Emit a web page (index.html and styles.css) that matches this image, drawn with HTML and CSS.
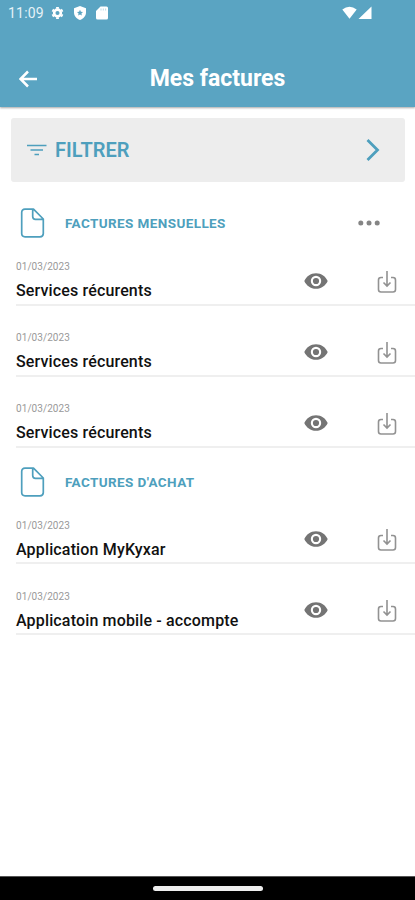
FILE: index.html
```html
<!DOCTYPE html>
<html lang="fr">
<head>
<meta charset="utf-8">
<title>Mes factures</title>
<link rel="stylesheet" href="styles.css">
</head>
<body>
<svg class="defs" width="0" height="0" aria-hidden="true">
  <symbol id="doc" viewBox="0 0 24 30"><path d="M4.500 1.200H13L22.800 11V25.500Q22.800 28.800 19.500 28.800H4.500Q1.200 28.800 1.200 25.500V4.500Q1.200 1.200 4.500 1.200ZM12.200 1.500V8.500Q12.200 11.300 15 11.300H22.500" fill="none" stroke="currentColor" stroke-width="1.700" stroke-linejoin="round"/></symbol>
  <symbol id="eye" viewBox="0 0 24 16"><path fill-rule="evenodd" fill="currentColor" d="M12 .2C6.500.2 2.300 3.500.3 8c2 4.500 6.200 7.800 11.700 7.800S21.700 12.500 23.700 8C21.700 3.500 17.500.2 12 .2ZM12 2.800a5.200 5.200 0 1 1 0 10.400a5.200 5.200 0 0 1 0-10.400ZM12 4.900a3.100 3.100 0 1 0 0 6.200a3.100 3.100 0 0 0 0-6.200Z"/></symbol>
  <symbol id="save" viewBox="0 0 20 24"><path d="M6 7.500H4Q1.500 7.500 1.500 10V19.500Q1.500 22 4 22H16Q18.500 22 18.500 19.500V10Q18.500 7.500 16 7.500H14M10 1V15.500M6.500 12.500L10 16L13.500 12.500" fill="none" stroke="currentColor" stroke-width="1.600"/></symbol>
</svg>
<div class="screen">
  <header class="top">
    <div class="status">
      <span class="clock">11:09</span>
      <svg class="gear" viewBox="0 0 14 14"><circle cx="7" cy="7" r="3.600" fill="none" stroke="#fff" stroke-width="2.800"/><path d="M7 .6V2.500M7 11.500V13.400M1.500 3.800L3 4.700M11 9.300L12.500 10.200M1.500 10.200L3 9.300M11 4.700L12.500 3.800" stroke="#fff" stroke-width="3"/></svg>
      <svg class="shield" viewBox="0 0 12 14"><path fill="#fff" fill-rule="evenodd" d="M6 0L12 2.200V6.500C12 10 9.500 12.800 6 14C2.500 12.800 0 10 0 6.500V2.200ZM6 3.800L6.900 5.800L9 6L7.400 7.400L7.900 9.500L6 8.400L4.100 9.500L4.600 7.400L3 6L5.100 5.800Z"/></svg>
      <svg class="card" viewBox="0 0 12 14"><path fill="#fff" d="M4.500.5H10.500Q12 .5 12 2V12Q12 13.500 10.500 13.500H1.500Q0 13.500 0 12V5Z"/><path d="M5 2.500V4.500M7.300 2.500V4.500M9.600 2.500V4.500" stroke="#a9d0e0" stroke-width=".8"/></svg>
      <svg class="signal" viewBox="0 0 31 14"><path fill="#fff" d="M.3 3.500Q7.500-1.800 14.700 3.500L7.500 12.700ZM16.500 13L29.500.5V13Z"/></svg>
    </div>
    <div class="bar">
      <svg class="back" viewBox="0 0 18 18"><path d="M18 9H2M9 1.500L1.500 9L9 16.500" fill="none" stroke="#fff" stroke-width="2.500"/></svg>
      <h1>Mes factures</h1>
    </div>
  </header>
  <main>
    <div class="filter">
      <svg class="lines" viewBox="0 0 20 12"><path d="M0 1.500H19.500M3.500 6H16M7.500 10.500H12" stroke="currentColor" stroke-width="1.700"/></svg>
      <span>FILTRER</span>
      <svg class="chevron" viewBox="0 0 14 24"><path d="M1.500 2L11.500 12L1.500 22" fill="none" stroke="currentColor" stroke-width="2.800"/></svg>
    </div>
    <section class="monthly">
      <div class="head"><svg class="doc"><use href="#doc"/></svg><h2>FACTURES MENSUELLES</h2><svg class="dots" viewBox="0 0 22 6"><g fill="#858585"><circle cx="2.800" cy="3" r="2.500"/><circle cx="11" cy="3" r="2.500"/><circle cx="19.200" cy="3" r="2.500"/></g></svg></div>
      <div class="row"><div class="info"><time>01/03/2023</time><b>Services récurents</b></div><svg class="eye"><use href="#eye"/></svg><svg class="save"><use href="#save"/></svg></div>
      <div class="row"><div class="info"><time>01/03/2023</time><b>Services récurents</b></div><svg class="eye"><use href="#eye"/></svg><svg class="save"><use href="#save"/></svg></div>
      <div class="row"><div class="info"><time>01/03/2023</time><b>Services récurents</b></div><svg class="eye"><use href="#eye"/></svg><svg class="save"><use href="#save"/></svg></div>
    </section>
    <section class="purchases">
      <div class="head"><svg class="doc"><use href="#doc"/></svg><h2>FACTURES D'ACHAT</h2></div>
      <div class="row"><div class="info"><time>01/03/2023</time><b>Application MyKyxar</b></div><svg class="eye"><use href="#eye"/></svg><svg class="save"><use href="#save"/></svg></div>
      <div class="row"><div class="info"><time>01/03/2023</time><b>Applicatoin mobile - accompte</b></div><svg class="eye"><use href="#eye"/></svg><svg class="save"><use href="#save"/></svg></div>
    </section>
  </main>
  <footer><i></i></footer>
</div>
</body>
</html>
```
FILE: styles.css
```css
* { box-sizing: border-box; }
body { margin: 0; font-family: Roboto, sans-serif; background: #fff; }
svg { display: block; flex: none; }
h1, h2 { margin: 0; }
.defs { position: absolute; }
.screen { width: 415px; height: 900px; display: flex; flex-direction: column; overflow: hidden; }
.top { height: 107px; background: #5aa4c2; color: #fff; box-shadow: 0 1px 2px rgba(0,0,0,.35); flex: none; }
.status { height: 26px; display: flex; align-items: center; padding: 0 42px 0 8px; }
.clock { width: 43px; font-size: 14px; letter-spacing: .2px; color: #e6f2f7; }
.gear { width: 13px; height: 14px; margin-right: 10px; }
.shield { width: 12px; height: 14px; margin-right: 10px; }
.card { width: 12px; height: 14px; }
.signal { width: 31px; height: 14px; margin-left: auto; }
.bar { height: 81px; display: flex; align-items: center; padding: 26px 0 2px 19px; }
.back { width: 18px; height: 18px; }
h1 { width: 361px; text-align: center; font-size: 23px; line-height: 26px; font-weight: 700; }
main { flex: 1; }
.filter { height: 64px; margin: 11px 10px 0 11px; padding: 0 25px 1px 16px; border-radius: 3px; background: #ededed; color: #4e9fbd; display: flex; align-items: center; }
.lines { width: 20px; height: 12px; margin-right: 8px; }
.filter span { font-size: 20px; font-weight: 600; letter-spacing: .05px; }
.chevron { width: 14px; height: 24px; margin-left: auto; }
.monthly { padding-top: 24px; }
.purchases { padding-top: 17px; }
.head { height: 34px; display: flex; align-items: center; padding: 0 35px 0 20px; color: #4e9fbd; }
.doc { width: 25px; height: 30px; }
h2 { margin-left: 20px; font-size: 13.5px; line-height: 16px; font-weight: 700; letter-spacing: .4px; }
.dots { width: 22px; height: 6px; margin-left: auto; }
.row { height: 71px; margin-left: 16px; padding-right: 18px; border-bottom: 2px solid #efefef; display: flex; align-items: flex-end; }
.head + .row { height: 66px; }
.purchases .head + .row { height: 65px; }
.info { flex: 1; display: flex; flex-direction: column; padding-bottom: 4px; }
.purchases .info { padding-bottom: 3px; }
time { font-size: 10px; line-height: 12px; letter-spacing: .07px; color: #999; }
b { margin-top: 8px; font-size: 16px; line-height: 19px; font-weight: 500; letter-spacing: .15px; color: #111; white-space: nowrap; }
.eye { width: 24px; height: 16px; color: #747474; margin: 0 49px 15px 0; }
.save { width: 20px; height: 24px; color: #929292; margin-bottom: 10px; }
footer { height: 24px; flex: none; background: #000; border-top: 1px solid #555; display: flex; justify-content: center; padding-top: 9px; }
footer i { width: 110px; height: 5px; border-radius: 3px; background: #eee; }
```
